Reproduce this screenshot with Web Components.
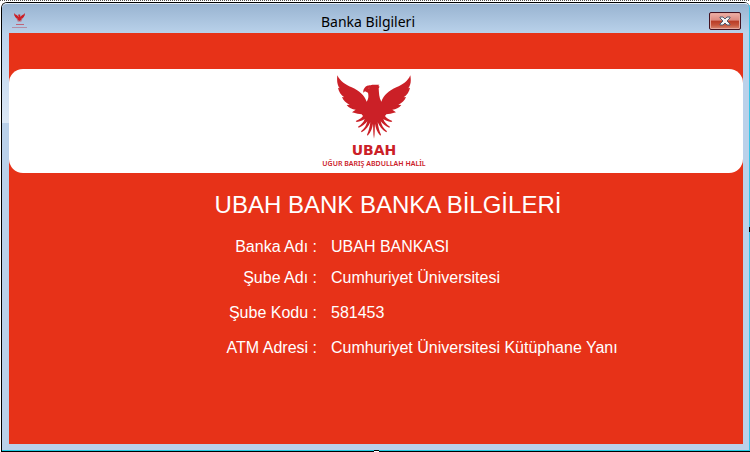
<!DOCTYPE html>
<html lang="tr">
<head>
<meta charset="utf-8">
<title>Banka Bilgileri</title>
<style>
  * { box-sizing: border-box; }
  html, body { margin: 0; min-height: 100vh; }
  body {
    display: flex;
    flex-direction: column;
    padding: 2px 0 0 1px;
    background: repeating-linear-gradient(90deg, #555 0 1px, #fff 1px 2px) 0 0 / 100% 1px no-repeat #fff;
    font-family: "Liberation Sans", Arial, sans-serif;
  }
</style>
</head>
<body>
<app-window caption="Banka Bilgileri">
  <brand-banner></brand-banner>
  <bank-details heading="UBAH BANK BANKA BİLGİLERİ">
    <detail-row label="Banka Adı :">UBAH BANKASI</detail-row>
    <detail-row label="Şube Adı :">Cumhuriyet Üniversitesi</detail-row>
    <detail-row label="Şube Kodu :">581453</detail-row>
    <detail-row label="ATM Adresi :">Cumhuriyet Üniversitesi Kütüphane Yanı</detail-row>
  </bank-details>
</app-window>
<script>
class UiElement extends HTMLElement {
  connectedCallback() {
    if (this.shadowRoot) return;
    const t = document.createElement('template');
    t.innerHTML = '<style>*{box-sizing:border-box}</style>' + this.render();
    this.attachShadow({ mode: 'open' }).append(t.content.cloneNode(true));
  }
}

customElements.define('eagle-mark', class extends UiElement {
  render() {
    return `<style>:host{display:block} svg{display:block;width:100%;height:auto}</style>
    <svg viewBox="10 8 222 192" fill="#cb2027" aria-hidden="true">
      <path d="M11 9 C20 28 34 36 54 45 C76 55 92 68 99 88 C105 79 105 70 103 61 L94 57 L89 61 C88 53 91 48 95 44 C101 37 109 40 116 37 L137 37 L134 41 L138 43 L135 48 C136 62 136 76 143 88 C150 68 166 55 188 45 C208 36 222 28 230 9 C233 26 231 38 224 48 L229 46 C227 58 220 68 210 75 L217 74 C213 85 205 92 194 97 L203 98 C196 107 187 111 176 112 L187 120 C175 124 164 126 158 126 L154 131 C157 136 164 141 176 146 L173 149 C162 147 155 144 149 140 C152 149 158 156 169 163 L167 166 C156 162 148 155 141 147 C144 159 149 168 160 177 L158 180 C145 173 137 161 132 150 C134 165 137 177 142 187 L140 190 C129 178 126 166 124 154 C123 169 124 184 121 199 C118 184 119 169 118 154 C116 166 113 178 102 190 L100 187 C105 177 108 165 110 150 C105 161 97 173 84 180 L82 177 C93 168 98 159 101 147 C94 155 86 162 75 166 L73 163 C84 156 90 149 93 140 C87 144 80 147 69 149 L66 146 C78 141 85 136 88 131 L84 126 C78 126 67 124 55 120 L66 112 C55 111 46 107 39 98 L48 97 C37 92 29 85 25 74 L32 75 C22 68 15 58 13 46 L18 48 C11 38 9 26 11 9 Z"/>
      <path d="M103 48 L108 47" stroke="#e98a8e" stroke-width="1" fill="none"/>
    </svg>`;
  }
});

customElements.define('app-window', class extends UiElement {
  render() {
    const caption = this.getAttribute('caption');
    return `<style>
      :host{display:flex;flex:1;flex-direction:column;position:relative;border:1px solid #000;border-right:0;border-radius:6px 6px 0 0}
      .frame{flex:1;display:flex;flex-direction:column;padding:0 6px 6px 7px;border-top:1px solid #e4edf7;border-right:1px solid #35c5e8;border-bottom:1px solid #22cbe4;border-radius:5px 5px 0 0;
        background:linear-gradient(#99b4d1,#b9d1ea) 0 0/100% 29px no-repeat,linear-gradient(#bad1eb,#dce8f6) 0 29px/7px 90px no-repeat,#bad1ea}
      header{display:flex;align-items:center;height:29px;padding:0 2px 0 3px}
      .icon{width:15px;display:grid;justify-items:center;gap:2px;padding-top:4px}
      .icon eagle-mark{width:11px}
      .icon i{height:1px;width:8px;background:#bf6478}
      .icon i+i{width:15px;background:#b58da4}
      h1{flex:1;margin:0;padding-top:7px;text-align:center;color:#000;font:400 14px/20px "Noto Sans","Open Sans",sans-serif}
      button{width:32px;height:18px;margin-top:5px;padding:0;display:grid;place-items:center;border:1px solid #431220;border-radius:2px;
        background:linear-gradient(#eeb1a8,#dc8b80 45%,#b83b25 50%,#c6533a 75%,#d98a72);box-shadow:inset 0 0 0 1px #e5a79d}
      svg{display:block}
      main{flex:1;background:#e73218;padding-top:36px}
      .grip{position:absolute;background:#000}
      .east{right:0;top:50%;width:1px;height:5px}
      .south{left:calc(50% - 2px);bottom:-1px;width:5px;height:2px;background:#fff;border-top:1px solid #000}
    </style>
    <div class="frame">
      <header>
        <div class="icon"><eagle-mark></eagle-mark><i></i><i></i></div>
        <h1>${caption}</h1>
        <button type="button" aria-label="Kapat">
          <svg width="12" height="10" viewBox="0 0 12 10"><path d="M1 1H4L6 3L8 1H11V2L8 5L11 8V9H8L6 7L4 9H1V8L4 5L1 2Z" fill="#f5f5f5" stroke="#505a6c"/></svg>
        </button>
      </header>
      <main><slot></slot></main>
    </div>
    <span class="grip east"></span><span class="grip south"></span>`;
  }
});

customElements.define('brand-banner', class extends UiElement {
  render() {
    return `<style>
      :host{display:flex;flex-direction:column;align-items:center;height:104px;padding:6px 4px 0 0;background:#fff;border-radius:14px;color:#cb2027}
      eagle-mark{width:74px}
      .name{margin-top:3px;font:700 14px/16px "DejaVu Sans",sans-serif}
      .people{font:600 7px/12px "Noto Sans",sans-serif}
    </style>
    <eagle-mark></eagle-mark>
    <div class="name">UBAH</div>
    <div class="people">UĞUR BARIŞ ABDULLAH HALİL</div>`;
  }
});

customElements.define('bank-details', class extends UiElement {
  render() {
    return `<style>
      :host{display:block;padding:16px 0 16px 24px;color:#fff}
      h2{margin:0 0 14px;text-align:center;font-size:24px;font-weight:400;line-height:32px}
    </style>
    <h2>${this.getAttribute('heading')}</h2>
    <div><slot></slot></div>`;
  }
});

customElements.define('detail-row', class extends UiElement {
  render() {
    return `<style>
      :host{display:grid;grid-template-columns:40% 1fr;gap:14px;font-size:16px;line-height:24px;margin-bottom:11px}
      :host(:first-child){margin-bottom:7px}
      .label{text-align:right}
    </style>
    <span class="label">${this.getAttribute('label')}</span><span><slot></slot></span>`;
  }
});
</script>
</body>
</html>
